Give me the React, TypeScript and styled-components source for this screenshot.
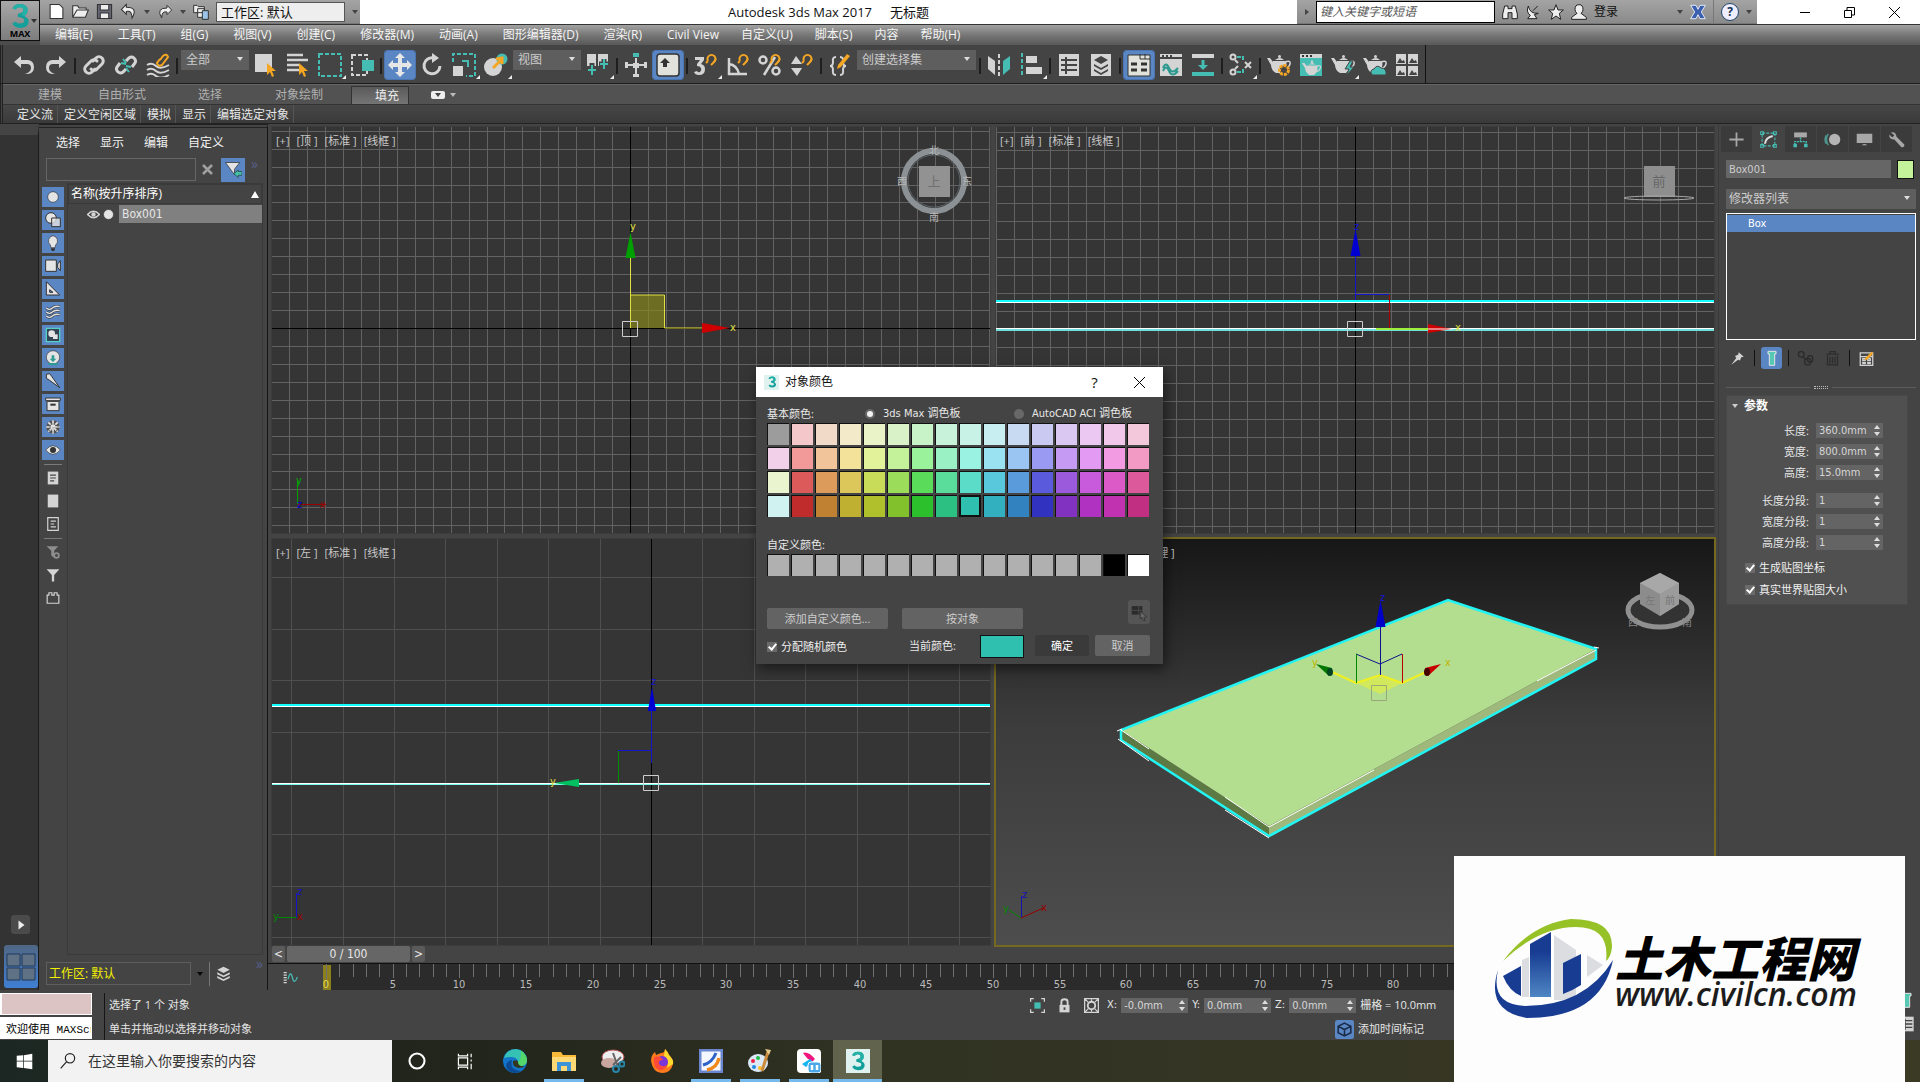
import React from "react";
import styled, { createGlobalStyle, css } from "styled-components";

const L = "#d4d4d4";
const T = "#45bdb3";
const O = "#f5a623";
const UI = `"Open Sans", "Noto Sans CJK SC", sans-serif`;
const TAHOMA = `"DejaVu Sans Condensed", "Noto Sans CJK SC", sans-serif`;

const Global = createGlobalStyle`
  * { box-sizing: border-box; }
  html, body { margin: 0; background: #444; }
  body { font: 12px/16px ${UI}; color: #e6e6e6; overflow: hidden; }
  button, input, select { font: inherit; color: inherit; margin: 0; padding: 0; border: 0; background: none; border-radius: 0; outline: 0; }
  button { display: flex; align-items: center; justify-content: center; white-space: nowrap; }
  svg { display: block; flex: none; }
`;

const Row = css`display: flex; align-items: center;`;

/* ---------- icons ---------- */
const magnet = <path d="M14 8a4 4 0 0 1 7-4c2 3-1 5-4 8M14 8l-2 2" fill="none" stroke={O} strokeWidth="2" />;
const teapot = <g><path d="M6 8h13q2 7-4 12H9Q4 17 4 12L0 5h3l3 4zM8 7q5-4 9 0z" fill={L} /><circle cx="12.5" cy="3.5" r="1.5" fill={L} /><path d="M18 9q6-2 5 2t-6 5" fill="none" stroke={L} strokeWidth="1.5" /></g>;
const cursor = <path d="M13 10v12l3-3 2 5 2-1-2-5h4z" fill={O} />;

const ICONS: Record<string, React.ReactNode> = {
  undo: <path d="M9 3L2 9l7 6v-4h6q4 0 4 4t-6 6h3q6-1 6-7t-6-7H9z" fill={L} />,
  redo: <path d="M15 3l7 6-7 6v-4H9q-4 0-4 4t6 6H8q-6-1-6-7t6-7h7z" fill={L} />,
  link: <g fill="none" stroke={L} strokeWidth="3" strokeLinecap="round"><path d="M11 8l3-3a4 4 0 0 1 6 6l-5 5a4 4 0 0 1-6 0" /><path d="M13 16l-3 3a4 4 0 0 1-6-6l5-5a4 4 0 0 1 6 0" /></g>,
  unlink: <g fill="none" strokeWidth="3"><path d="M12 8l3-3a4 4 0 0 1 6 5l-3 4M12 16l-3 3a4 4 0 0 1-6-5l3-4" stroke={L} /><path d="M9 6l3 4M7 10l5 1M12 13l5 1M12 15l3 4" stroke={T} strokeWidth="2" /></g>,
  bind: <g fill="none" strokeWidth="2"><path d="M1 12q5-3 9 1t13-1M1 17q5-3 9 1t13-1M1 22q5-3 9 1t13-1" stroke={L} /><path d="M14 7l3-4q4-3 5 1l-6 8q-4 2-5-2l3-4" stroke={O} /></g>,
  pick: <g><path d="M1 1h17v18H1z" fill={L} />{cursor}</g>,
  pickName: <g><path d="M1 2h16M1 7h21M1 12h12M1 17h12" stroke={L} strokeWidth="2.5" />{cursor}</g>,
  region: <rect x="1" y="1" width="22" height="22" fill="none" stroke={T} strokeWidth="2" strokeDasharray="4 2" />,
  crossing: <g><rect x="2" y="2" width="15" height="20" fill="none" stroke={L} strokeWidth="2" strokeDasharray="4 2" /><path d="M12 7h12v11H12z" fill={T} /></g>,
  move: <path d="M12 0l5 5h-3v5h5V7l5 5-5 5v-3h-5v5h3l-5 5-5-5h3v-5H5v3l-5-5 5-5v3h5V5H7z" fill="#e6e6e6" />,
  rotate: <g><path d="M20 13a8 8 0 1 1-6-8" fill="none" stroke={L} strokeWidth="3" /><path d="M12 0l7 5-7 5z" fill={L} /></g>,
  scale: <g><path d="M1 9V1h22v22h-9" fill="none" stroke={T} strokeWidth="2" strokeDasharray="4 2" /><path d="M1 13h10v10H1z" fill={L} /><path d="M10 8h6v6" fill="none" stroke={T} strokeWidth="2" /></g>,
  place: <g><circle cx="9" cy="14" r="9" fill={L} /><circle cx="18" cy="6" r="5.5" fill={T} /><path d="M9 15l8-8M12 6l6-1v6" stroke={O} strokeWidth="3" fill="none" /></g>,
  pivot: <g><path d="M1 1h9v12H1zM12 1h10v12H12z" fill={L} /><path d="M6 10v12M1 16h10M18 6v12M13 11h10" stroke="#444" strokeWidth="5" /><path d="M6 12v10M2 17h8M18 6v10M14 11h8" stroke={T} strokeWidth="2" /></g>,
  manip: <g><path d="M12 5v18M2 12h20" stroke={L} strokeWidth="2" /><path d="M9 10h6v5H9zM1 9h3v6H1zM20 9h3v6h-3zM9 21h6v3H9z" fill={L} /><path d="M9 0h6v4H9z" fill={T} /></g>,
  keyboard: <g><rect x="1" y="1" width="22" height="22" rx="3" fill="#e2e2dc" stroke="#333" strokeWidth="1.5" /><path d="M9 5l5 5h-3v4H7v-4H4z" fill="#333" /></g>,
  snap3: <g><path d="M1 4h9v3L7 11q4 1 4 5 0 6-6 6-4 0-5-3l3-1q1 2 3 1 2-2 1-4-1-2-4-2v-2l3-4H1z" fill={L} />{magnet}</g>,
  angle: <g><path d="M3 5v16h18M3 11q8 1 10 10" fill="none" stroke={L} strokeWidth="2.5" />{magnet}</g>,
  percent: <g><g fill="none" stroke={L} strokeWidth="2.5"><circle cx="5" cy="7" r="3.5" /><circle cx="18" cy="18" r="3.5" /><path d="M17 4L6 22" /></g>{magnet}</g>,
  spinner: <g><path d="M1 11l5-8 6 8zM1 15h11l-5 8z" fill={L} />{magnet}</g>,
  braces: <g><path d="M8 4Q4 4 5 9q0 4-3 4 3 0 3 4-1 5 3 5M12 4q4 0 3 5 0 4 3 4-3 0-3 4 1 5-3 5" fill="none" stroke={L} strokeWidth="2" /><path d="M10 12l9-11 3 2-9 11-4 2z" fill={O} /></g>,
  mirror: <g><path d="M1 3l7 5v14l-7-6z" fill={L} /><path d="M23 3l-7 5v14l7-6z" fill={T} /><path d="M12 1v22" stroke={L} strokeWidth="2" strokeDasharray="4 2" /></g>,
  align: <g><path d="M3 0v24" stroke={T} strokeWidth="2" strokeDasharray="4 2" /><path d="M7 3h11v7H7zM7 14h16v7H7z" fill={L} /></g>,
  layerList: <g><path d="M2 1h20v22H2z" fill={L} /><path d="M4 7h16M4 12h16M4 17h16M9 4v17" stroke="#444" strokeWidth="2" /></g>,
  layers: <g><path d="M2 1h20v22H2z" fill={L} /><path d="M12 3l7 4-7 4-7-4zM5 11l7 4 7-4v2l-7 4-7-4zM5 16l7 4 7-4v2l-7 4-7-4z" fill="#444" /></g>,
  ribbon: <g><path d="M1 2h22v21H1z" fill="#e2e2dc" stroke="#333" /><path d="M13 1v5h10M18 1v5" stroke="#333" fill="none" /><path d="M4 11h6M14 11h6M4 17h6M14 17h6" stroke="#333" strokeWidth="3" /></g>,
  curve: <g><path d="M1 1h22v22H1z" fill={L} /><path d="M1 5h22M4 2v2M8 2v2M12 2v2" stroke="#444" strokeWidth="2" /><path d="M4 15q3-7 6 0t9 0M4 18q3-7 6 0t9 0" fill="none" stroke="#2f9a90" strokeWidth="2" /></g>,
  schematic: <g><path d="M1 1h22v4H1z" fill={L} /><path d="M1 19h22v4H1z" fill={T} /><path d="M12 7v6" stroke={T} strokeWidth="3" /><path d="M7 12h10l-5 5z" fill={T} /></g>,
  material: <g fill="none" strokeWidth="2"><circle cx="4" cy="4" r="2.5" stroke={L} /><circle cx="4" cy="19" r="2.5" stroke={L} /><path d="M16 9l6 6M22 9l-6 6" stroke={L} /><path d="M8 4h6v4M8 19h6v-4" stroke={T} strokeDasharray="4 1" /><path d="M6 7l3 3M6 16l3-3" stroke={L} /></g>,
  renderSetup: <g>{teapot}<circle cx="17" cy="17" r="4.5" fill="#444" stroke={O} strokeWidth="3" strokeDasharray="3 1" /></g>,
  frame: <g><path d="M1 1h22v22H1z" fill={T} /><path d="M1 1h22v4H1z" fill={L} /><path d="M3 3h2M7 3h2M11 3h2" stroke="#333" strokeWidth="2" /><g transform="translate(3 6) scale(.8)">{teapot}</g></g>,
  render: <g>{teapot}<path d="M19 8l-5 8h4l-3 7 8-9h-4l3-6z" fill={T} stroke="#444" /></g>,
  cloud: <g>{teapot}<path d="M9 22q-3-5 2-6 3-5 7-1 6 0 5 7z" fill={T} stroke="#444" /></g>,
  gallery: <g><path d="M1 1h10v10H1zM13 1h10v10H13zM1 13h10v10H1zM13 13h10v10H13z" fill={L} /><path d="M2 10l3-5 2 3 2-1 1 3zM14 10l3-5 2 3 2-1 1 3zM2 22l3-5 2 3 2-1 1 3zM14 22l3-5 2 3 2-1 1 3z" fill="#444" /></g>,
  /* scene explorer */
  circle: <circle cx="12" cy="12" r="8" fill="#e4e4e4" stroke="#333" />,
  shapes: <g stroke="#333" strokeWidth="1.5"><circle cx="9" cy="9" r="8" fill="#e4e4e4" /><path d="M10 9h13v13H10z" fill="#e4e4e4" fillOpacity=".8" /></g>,
  bulb: <g stroke="#333" fill="#e4e4e4"><path d="M12 1a8 8 0 0 0-4 14l1 4h6l1-4a8 8 0 0 0-4-14z" /><path d="M9 21h6M10 23h4" strokeWidth="2" /></g>,
  camera: <path d="M1 3h16v17H1zM19 9l4-5v15l-4-5z" fill="#e4e4e4" stroke="#333" strokeWidth="1.5" />,
  ruler: <path d="M2 1l20 20H2zM7 13v4h5z" fill="#e4e4e4" fillRule="evenodd" stroke="#333" strokeWidth="1.5" />,
  waves: <g fill="none"><path d="M2 6q5 4 9 0t11-2M2 12q5 4 9 0t11-2M2 18q5 4 9 0t11-2" stroke="#333" strokeWidth="4" /><path d="M2 6q5 4 9 0t11-2M2 12q5 4 9 0t11-2M2 18q5 4 9 0t11-2" stroke="#e4e4e4" strokeWidth="2" /></g>,
  group: <g><path d="M2 2h20v20H2z" fill="#345" stroke="#56d0c4" strokeWidth="2" /><circle cx="10" cy="10" r="5" fill="#e4e4e4" /><path d="M12 11h7v7h-7z" fill="#e4e4e4" /></g>,
  xref: <g><circle cx="12" cy="11" r="10" fill="#e4e4e4" stroke="#333" /><path d="M10 8h4v5h3l-5 5-5-5h3z" fill="#2f9a90" /><path d="M5 21h14" stroke="#2f9a90" strokeWidth="3" /></g>,
  bone: <path d="M2 2l5-1 3 4 12 17L7 11 2 8z" fill="#e4e4e4" stroke="#333" strokeWidth="1.5" />,
  container: <g fill="#e4e4e4" stroke="#333" strokeWidth="1.5"><path d="M3 8h18v14H3zM1 3h22v4H1z" /><path d="M8 13h8" strokeWidth="3" /></g>,
  flake: <g><circle cx="12" cy="12" r="10" fill="#555" /><path d="M12 2v20M2 12h20M5 5l14 14M19 5L5 19" stroke="#e4e4e4" strokeWidth="2.5" strokeDasharray="5 1" /></g>,
  eyeBlue: <g><path d="M1 12q11-13 22 0-11 13-22 0z" fill="#e4e4e4" stroke="#333" /><circle cx="12" cy="12" r="4.5" fill="#333" /></g>,
  eye: <g><path d="M1 12q11-12 22 0-11 12-22 0z" fill="none" stroke={L} strokeWidth="3" /><circle cx="12" cy="12" r="4" fill={L} /></g>,
  docLines: <g><path d="M3 1h18v22H3z" fill={L} /><path d="M7 7h10M7 12h10M7 17h7" stroke="#444" strokeWidth="2" /></g>,
  docBlank: <path d="M3 1h18v22H3z" fill={L} />,
  docOutline: <path d="M3 1h18v22H3zM8 7h9M8 12h6M8 17h9" fill="none" stroke={L} strokeWidth="2" />,
  funnelGear: <g><path d="M1 2h20l-7 8v12l-5-4v-8z" fill="#8e8e8e" /><circle cx="18" cy="18" r="4" fill="none" stroke="#8e8e8e" strokeWidth="3" /></g>,
  funnel: <path d="M1 2h22l-9 10v11h-4V12z" fill={L} />,
  brick: <path d="M2 7h3V3h5v4h4V3h5v4h3v14H2z" fill="none" stroke={L} strokeWidth="2" />,
  filterBlue: <g><path d="M2 2h19l-7 9v7l-4-5z" fill="#e4e4e4" stroke="#333" /><path d="M24 14v5h-5v3l-6-5 6-5v2z" fill="#46bfa8" stroke="#244" /></g>,
  stack: <path d="M12 1l10 5-10 5L2 6zM2 10l10 5 10-5v3l-10 5-10-5zM2 16l10 5 10-5v3l-10 5-10-5z" fill={L} />,
  /* command panel */
  plus: <path d="M12 2v20M2 12h20" stroke="#a8a8a8" strokeWidth="2.5" />,
  modify: <g fill="none"><path d="M3 3h18v18H3z" stroke={T} strokeWidth="1.5" strokeDasharray="4 2" /><path d="M1 1h4v4H1zM19 1h4v4h-4zM1 19h4v4H1zM19 19h4v4h-4z" stroke={T} strokeWidth="1.5" /><path d="M7 18q1-9 11-11" stroke="#ddd" strokeWidth="3" /></g>,
  hierarchy: <g><path d="M3 2h18v7H3z" fill="#a8a8a8" /><path d="M12 9v5M4 20v-5h16v5" fill="none" stroke={T} strokeDasharray="3 1" strokeWidth="2" /><path d="M2 18h5v5H2zM17 18h5v5h-5z" fill={T} /></g>,
  motion: <g><circle cx="15" cy="12" r="8" fill="#b4b4b4" /><path d="M6 4q-5 8 0 16M3 6q-3 6 0 12" fill="none" stroke="#4d9690" strokeWidth="2" /></g>,
  display: <path d="M1 4h22v13H1zM8 20q4-3 8 0z" fill="#a8a8a8" />,
  wrench: <path d="M4 2q7-2 8 6l11 11q1 3-2 4h-2L9 12Q1 12 2 5l4 4 3-3z" fill="#a8a8a8" />,
  pin: <path d="M14 2l8 7-4 1-2 5-3-1L2 22l8-11-2-3 5-2z" fill={L} />,
  tube: <path d="M6 2h12v4h-2v17H8V6H6z" fill="#56c8b4" stroke="#e4e4e4" strokeWidth="1.5" />,
  unique: <g fill="none" stroke="#2c2c2c" strokeWidth="2"><circle cx="6" cy="6" r="4" /><path d="M8 9l5 5" /><rect x="11" y="12" width="8" height="9" rx="3" /><rect x="15" y="8" width="7" height="9" rx="3" /></g>,
  trash: <path d="M2 5h20M8 4V1h8v3M4 7v15h16V7M8 9v11M12 9v11M16 9v11" fill="none" stroke="#2c2c2c" strokeWidth="2" />,
  config: <g><path d="M2 3h20v20H2z" fill="none" stroke={L} strokeWidth="2" /><path d="M2 9h20M6 12h4v3H6zM14 12h4v3h-4zM6 18h4v2H6zM14 18h4v2h-4z" fill="none" stroke={L} strokeWidth="2" /><path d="M10 11L20 1l3 3-9 9-5 2z" fill={O} /></g>,
  isolate: <g><path d="M1 6V1h5M18 1h5v5M23 18v5h-5M6 23H1v-5" fill="none" stroke={L} strokeWidth="2" /><path d="M7 7h10v10H7z" fill={T} /></g>,
  lock: <g><path d="M7 11V6q0-4 5-4t5 4v5" fill="none" stroke={L} strokeWidth="3" /><path d="M4 11h16v12H4z" fill={L} /><path d="M12 15v4" stroke="#444" strokeWidth="3" /></g>,
  absolute: <g fill="none" stroke={L} strokeWidth="2"><path d="M1 1h22v22H1zM1 1l6 6M23 1l-6 6M1 23l6-6M23 23l-6-6" /><circle cx="12" cy="12" r="6" strokeWidth="3" /><path d="M12 2v5M12 17v5" /></g>,
  tag: <g><rect x="0" y="0" width="24" height="24" rx="3" fill="#5b86c4" /><path d="M12 4l8 4v8l-8 4-8-4V8zM4 8l8 4 8-4M12 12v8" fill="none" stroke="#1b2c48" strokeWidth="2" /></g>,
  swatchPick: <g><path d="M1 3h15v12H1z" fill="#2b2b2b" /><path d="M11 3v12M1 9h15" stroke="#555" /><path d="M13 10l9 8-4 1 2 5-3-1-2-4-2 2z" fill="#666" stroke="#2b2b2b" /></g>,
  miniCurve: <g fill="none"><path d="M1 4h5M1 8h5M1 12h5M1 16h5M1 20h5" stroke={L} strokeWidth="2" /><path d="M8 15q4-16 7-3t8-1" stroke={T} strokeWidth="2" /></g>,
  /* title bar */
  file: <path d="M3 2h13l5 5v15H3z" fill="#fff" stroke="#333" strokeWidth="1.5" />,
  open: <path d="M1 20V4h7l2 3h10v3h3l-4 10zM1 20L7 10h13" fill="#eee" stroke="#333" strokeWidth="1.5" />,
  save: <g stroke="#333" strokeWidth="1.5"><path d="M2 2h20v20H2z" fill="#667" /><path d="M6 2h12v8H6zM6 14h12v8H6z" fill="#eee" /></g>,
  qUndo: <path d="M9 2L2 9l7 7v-4q8-2 8 9 9-15-8-15z" fill="#eee" stroke="#333" strokeWidth="1.5" />,
  qRedo: <path d="M15 2l7 7-7 7v-4q-8-2-8 9-9-15 8-15z" fill="#eee" stroke="#333" strokeWidth="1.5" />,
  project: <g stroke="#333" strokeWidth="1.5" fill="#eee"><path d="M1 2h5l2 2h9v9H1zM7 7h10v13H7z" /><path d="M14 10h9v13h-9z" fill="#9cc4e8" /></g>,
  binoc: <path d="M4 3h5v4h6V3h5l3 12v7h-8v-9h-6v9H1v-7z" fill="#eee" stroke="#222" strokeWidth="1.5" />,
  dish: <path d="M5 3q2 12 15 11l-6 2 4 6H4l4-5Q1 12 5 3zM12 10l7-7" fill="#eee" stroke="#222" strokeWidth="1.5" />,
  star: <path d="M12 1l3 8h8l-6 5 2 9-7-5-7 5 2-9-6-5h8z" fill="#eee" stroke="#222" strokeWidth="1.5" />,
  user: <path d="M12 1q6 0 6 7 0 4-3 6l8 6v3H1v-3l8-6q-3-2-3-6 0-7 6-7z" fill="#eee" stroke="#222" strokeWidth="1.5" />,
  exchange: <path d="M1 2h8l3 6 3-6h8l-6 10 6 10h-8l-3-6-3 6H1l6-10z" fill="#3b5fae" stroke="#dfe8f8" strokeWidth="1.5" />,
  play: <path d="M7 3l12 9-12 9z" fill="#eee" />,
  /* task bar */
  windows: <path d="M1 4l9-1v8H1zM11 3l12-2v10H11zM1 12h9v9l-9-1zM11 12h12v11l-12-2z" fill="#fff" />,
  magnifier: <g fill="none" stroke="#222" strokeWidth="1.8"><circle cx="15" cy="8" r="7" /><path d="M10 13L1 23" /></g>,
  cortana: <circle cx="12" cy="12" r="9" fill="none" stroke="#fff" strokeWidth="2.5" />,
  taskview: <path d="M2 7h13v10H2zM2 1v3h13V1M2 23v-3h13v3M20 1v5M20 9v3M20 15v8" fill="none" stroke="#fff" strokeWidth="1.7" />,
  edge: <g><circle cx="12" cy="12" r="12" fill="#1275c9" /><path d="M1 9Q4 0 13 0q10 1 11 11 0 6-7 6-4-1-2-4Q14 6 1 9z" fill="#35c1b4" /><path d="M18 2q6 4 6 10-1 5-7 5-4-1-2-4 3 0 3-11z" fill="#55d86a" /><path d="M9 11q-3 10 9 11-8 5-14-2-3-7 5-9z" fill="#0c4a94" /><path d="M10 12q-1 6 6 7 4 0 6-2-7 1-7-4 0-3-5-1z" fill="#333621" /></g>,
  folder: <g><path d="M0 3h9l2 3h13v16H0z" fill="#f9b93a" /><path d="M0 8h24v14H0z" fill="#ffd975" /><path d="M5 13h14v9h-4v-5H9v5H5z" fill="#3d93d8" /></g>,
  snip: <g><ellipse cx="12" cy="8" rx="11" ry="7" fill="#eee" stroke="#b55" /><ellipse cx="8" cy="14" rx="8" ry="5" fill="#c9a6a0" /><path d="M12 4l5 14M20 8l-8 8" stroke="#666" strokeWidth="2" /><circle cx="15" cy="20" r="3" fill="none" stroke="#2a86a8" strokeWidth="2" /><circle cx="21" cy="15" r="2.5" fill="none" stroke="#2a86a8" strokeWidth="2" /></g>,
  firefox: <g><path d="M1 12q0-6 4-9l1 3 5-2Q15 4 15 0q3 3 4 6 5 5 4 9-2 9-11 9T1 12z" fill="#ff7a1c" /><path d="M15 0q3 3 4 6 5 5 4 9l-6 4q3-8-3-12z" fill="#ffd92e" /><circle cx="12" cy="13" r="6" fill="#7a35d8" /><path d="M4 8q6-2 9 3-5 0-4 4 3 4 8 1-2 6-8 5-6-2-5-13z" fill="#ff4a3a" /></g>,
  note: <g><rect x="1" y="1" width="22" height="22" fill="#f4f7ff" stroke="#6a86cf" strokeWidth="3" /><path d="M4 16Q13 14 17 4" stroke="#2a62c8" strokeWidth="3" fill="none" /><path d="M8 21q10-2 12-12" stroke="#f08a1c" strokeWidth="3.5" fill="none" /></g>,
  paint: <g><ellipse cx="10" cy="14" rx="10" ry="9" fill="#dbe9f6" /><circle cx="5" cy="12" r="2" fill="#e24" /><circle cx="10" cy="9" r="2" fill="#2b4" /><circle cx="6" cy="18" r="2" fill="#28d" /><circle cx="12" cy="19" r="2" fill="#fb2" /><path d="M14 22L20 3" stroke="#c98b3c" strokeWidth="3" /><path d="M17 0l6 1-2 5z" fill="#e8c98a" /></g>,
  youku: <g><rect width="24" height="24" rx="4" fill="#fff" /><path d="M6 4q5-2 12 6l-3 3Q9 9 6 4z" fill="#f0147c" /><path d="M5 15l8-5 3 3-7 5z" fill="#18b4f4" /><rect x="11" y="13" width="13" height="11" rx="3" fill="#4aa8e8" stroke="#fff" /><path d="M15 16v5M20 16v5" stroke="#fff" strokeWidth="2.5" /></g>,
};

const Icon = ({ n, s = 24 }: { n: string; s?: number }) => (
  <svg width={s} height={s} viewBox="0 0 24 24" aria-hidden="true">{ICONS[n]}</svg>
);

const Three = ({ s }: { s: number }) => (
  <svg width={s} height={s} viewBox="0 0 24 24" aria-hidden="true">
    <path d="M5 5q2-4 7-4 7 0 7 6 0 3-3 5 4 2 4 5 0 6-8 6-5 0-7-4l3-2q1 2 4 2 4 0 4-3 0-2-6-3v-3q5-1 5-3 0-3-3-3t-4 2z" fill="#13a09a" />
    <path d="M5 5q2-4 7-4 7 0 7 6 0 3-3 5l-3-1q2-2 2-4 0-3-3-3t-4 2z" fill="#25b0a8" />
  </svg>
);

/* ---------- frame ---------- */
const Shell = styled.div`display: flex; flex-direction: column; min-height: 100vh; background: #444; position: relative;`;

const Header = styled.header`display: grid; grid-template-columns: 40px 1fr; background: #4c4c4c;`;
const AppButton = styled.button`
  height: 41px; flex-direction: column; background: linear-gradient(#a8a8a8, #7d7d7d); border: 1px solid #111; color: #000;
  font: bold 9px/9px ${UI}; position: relative;
  &::after { content: ""; position: absolute; right: 2px; top: 18px; border: 3px solid transparent; border-top: 4px solid #333; }
`;
const TitleBar = styled.div`display: flex; height: 24px; background: #fff; color: #111;`;
const Strip = styled.div<{ $w: number; $gap: number }>`${Row} width: ${p => p.$w}px; gap: ${p => p.$gap}px; padding: 0 5px 0 8px; background: linear-gradient(#a4a4a4, #8a8a8a); border-bottom: 1px solid #777; color: #111;`;
const Title = styled.h1`${Row} flex: 1; justify-content: center; gap: 18px; margin: 0; font: 13px/24px ${UI};`;
const WinButtons = styled.div`display: flex; width: 163px; padding-left: 25px; button { width: 45px; }`;
const MiniDrop = styled.span<{ $c?: string }>`border: 3px solid transparent; border-top: 4px solid ${p => p.$c || "#444"}; border-bottom: 0; flex: none;`;
const MiniRight = styled.span`border: 3px solid transparent; border-left: 4px solid #444; border-right: 0; flex: none;`;
const WorkspaceSelect = styled.select`appearance: none; flex: none; width: 129px; height: 20px; padding: 0 4px; background: #eee; border: 1px solid #555; font: 13px/18px ${UI};`;
const SearchInput = styled.input`flex: none; width: 179px; height: 22px; background: #fff; border: 1px solid #000; padding-left: 3px; font-style: italic; &::placeholder { color: #555; }`;
const HelpButton = styled.button`width: 18px; height: 18px; border-radius: 50%; background: #eef; border: 1px solid #246; color: #135; font-weight: bold;`;
const MenuBar = styled.nav`${Row} height: 21px; gap: 22px; padding-left: 15px; background: linear-gradient(#a2a2a2, #777 50%, #585858); color: #f4f4f4; border-top: 1px solid #333;`;
const MenuGroup = styled.div<{ $gap: number }>`display: flex; gap: ${p => p.$gap}px;`;

const Toolbar = styled.div`display: flex; height: 39px; border-bottom: 1px solid #1c1c1c;`;
const ToolGroup = styled.div`display: flex; padding: 5px 2px 0 5px; border-right: 1px solid #111; border-left: 3px double #222;`;
const ToolButton = styled.button<{ $on?: boolean; $fly?: boolean }>`
  width: 32px; height: 30px; border-radius: 3px; position: relative;
  ${p => p.$on && `background: #5b86c4; border: 1px solid #4a74b2; background-clip: padding-box;`}
  ${p => p.$fly && `&::after { content: ""; position: absolute; right: 0; bottom: 1px; border: 2px solid #eee; border-left-color: transparent; border-top-color: transparent; }`}
`;
const ToolSep = styled.i`width: 2px; height: 16px; margin: 8px 2px 0; background: #1e1e1e;`;
const Drop = styled.span<{ $w: number }>`
  position: relative; display: block; width: ${p => p.$w}px; margin: 0 1px; height: 20px;
  &::after { content: ""; position: absolute; right: 6px; top: 7px; border: 3px solid transparent; border-top: 4px solid #ddd; border-bottom: 0; }
  select { appearance: none; width: 100%; height: 20px; background: #5e5e5e; padding-left: 5px; color: #ccc; }
`;

const Ribbon = styled.div`border-left: 3px double #222; border-bottom: 1px solid #222;`;
const RibbonTabs = styled.div`display: flex; align-items: flex-end; height: 21px; padding-left: 14px; background: #525252; border-bottom: 1px solid #333; border-top: 1px solid #666;`;
const RibbonTab = styled.button<{ $w: number; $on?: boolean }>`
  width: ${p => p.$w}px; height: 18px; color: #b0b0b0;
  ${p => p.$on && `background: linear-gradient(#5a5a5a, #757575); color: #eee; border: 1px solid #333; border-bottom: 0; padding-left: 14px; margin-left: 12px;`}
`;
const RibbonMore = styled.span`${Row} gap: 5px; height: 18px; padding-left: 22px;`;
const RibbonPanels = styled.div`display: flex; height: 18px; padding-left: 10px; background: linear-gradient(#474747, #3a3a3a); button { padding: 2px 4px 0; border-right: 1px solid #555; margin-right: 2px; }`;
const Pill = styled.button`width: 14px; height: 8px; background: #eee; border-radius: 2px;`;

const Main = styled.main`display: flex; flex: 1; min-height: 0;`;
const Dock = styled.aside`
  display: flex; flex-direction: column; justify-content: flex-end; align-items: center; width: 39px; background: #333; border-top: 11px solid #444; border-right: 1px solid #1a1a1a; padding: 0 0 2px 3px; gap: 11px;
`;
const DockPlay = styled.button`width: 19px; height: 19px; border-radius: 3px; background: #4b4b4b;`;
const LayoutTab = styled.button`width: 34px; height: 43px; border-radius: 3px; background: linear-gradient(#4f6684, #3f7fd4);`;

const Explorer = styled.section`display: flex; flex-direction: column; width: 229px; padding: 7px 4px 0 3px; border-right: 1px solid #151515; border-top: 4px double #222;`;
const ExplorerMenu = styled.div`display: flex; align-items: flex-start; gap: 20px; padding-left: 14px; height: 22px; color: #f0f0f0;`;
const ExplorerSearch = styled.div`${Row} gap: 6px; height: 25px; padding-left: 4px; input { width: 150px; height: 23px; border: 1px solid #666; }`;
const FilterButton = styled.button`width: 24px; height: 24px; background: #5b86c4; margin-left: 2px;`;
const Chevron = styled.span<{ $end?: boolean }>`color: #56608c; font-size: 14px; align-self: flex-start; line-height: 14px; ${p => p.$end && "margin-left: auto;"}`;
const ExplorerBody = styled.div`display: flex; flex: 1; padding-top: 1px;`;
const FilterColumn = styled.div`display: flex; flex-direction: column; align-items: flex-start; width: 25px; padding-top: 4px; gap: 3px;`;
const Filter = styled.button<{ $on?: boolean }>`width: 22px; height: 20px; ${p => p.$on && `background: #5b86c4;`}`;
const FilterSep = styled.i`width: 18px; height: 1px; margin: 1px 2px 0; background: #7a7a7a;`;
const Tree = styled.div`flex: 1; border: 1px solid #3a3a3a;`;
const TreeHead = styled.button`width: 100%; height: 20px; justify-content: space-between; padding: 0 2px; border: 1px solid #3a3a3a; color: #fff;`;
const Up = styled.i`border: 4px solid transparent; border-bottom: 7px solid #fff; border-top: 0;`;
const TreeRow = styled.div`${Row} height: 20px; padding-left: 19px; gap: 1px;`;
const TreeName = styled.button`flex: 1; height: 18px; margin-left: 2px; padding-left: 3px; justify-content: flex-start; background: #808080; font: 12px/18px ${TAHOMA};`;
const ExplorerFoot = styled.div`${Row} height: 35px; gap: 6px; padding: 2px 0 0 4px;`;
const YellowSelect = styled.select`appearance: none; width: 145px; height: 23px; padding-left: 2px; border: 1px solid #5e5e5e; color: #f4f000;`;
const VSep = styled.i`width: 1px; height: 24px; background: #777;`;

const Stage = styled.section`display: flex; flex-direction: column; flex: 1; min-width: 0;`;
const Views = styled.div`display: grid; flex: 1; grid-template: 1fr 1fr / 1fr 1fr; gap: 6px; padding: 3px 4px 0; min-height: 0;`;
const View = styled.div<{ $active?: boolean }>`
  position: relative; min-width: 0; min-height: 0; overflow: hidden;
  background: ${p => p.$active ? "linear-gradient(#171717, #3c3c3c 45%, #4d4d4d)" : "#353535"};
  box-shadow: ${p => p.$active ? "0 0 0 2px #75691f" : "0 0 0 1px #3c3c3c"};
  > svg { position: absolute; inset: 0; width: 100%; height: 100%; }
`;
const ViewLabel = styled.div`position: absolute; left: 4px; top: 6px; display: flex; gap: 7px; color: #c8c8c8; font: 11px/16px ${UI};`;

const TimeSlider = styled.div`${Row} height: 19px; padding-left: 4px; gap: 2px; font-family: ${TAHOMA}; border-bottom: 1px solid #111; button { height: 16px; background: #5a5a5a; border-radius: 2px; width: 13px; }`;
const TimeThumb = styled.div`width: 123px; height: 16px; background: #666; text-align: center; border-radius: 2px;`;
const Track = styled.div`display: flex; height: 26px; > span { ${Row} width: 55px; padding-left: 15px; } > svg { flex: 1; background: #2b2b2b; min-width: 0; }`;

const Panel = styled.aside`width: 202px; padding: 2px 4px 0 7px; display: flex; flex-direction: column; border-left: 1px solid #3a3a3a;`;
const Tabs = styled.div`display: flex; gap: 1px; height: 26px; margin-left: -5px; button { width: 31px; background: #3b3b3b; } button:nth-child(2) { background: #444; }`;
const NameRow = styled.div`display: flex; justify-content: space-between; padding-right: 2px; margin-top: 8px; input { width: 165px; height: 18px; background: #666; padding-left: 3px; font-family: ${TAHOMA}; font-size: 11px; color: #ccc; } button { width: 17px; height: 19px; background: #c4f29a; border: 1px solid #111; }`;
const ModList = styled(Drop)`width: auto; margin: 10px 0 4px; select { padding-left: 3px; }`;
const StackBox = styled.div`height: 127px; border: 1px solid #fff; padding-top: 1px; button { width: 100%; height: 17px; justify-content: flex-start; padding-left: 21px; background: #5b86c4; font: 11px/17px ${TAHOMA}; color: #fff; }`;
const StackTools = styled.div`${Row} height: 36px; gap: 6px; padding-left: 1px;`;
const StackTool = styled.button<{ $on?: boolean }>`width: 21px; height: 22px; border-radius: 3px; ${p => p.$on && `background: #5b86c4;`}`;
const PSep = styled.i`width: 1px; height: 16px; background: #111;`;
const Grip = styled.div`${Row} gap: 4px; height: 19px; padding-top: 4px; color: #ccc; &::before, &::after { content: ""; flex: 1; height: 1px; background: #5c5c5c; } i { width: 14px; height: 3px; border: 1px dotted #bbb; border-width: 1px 0; }`;
const Rollout = styled.section`background: #505050; width: 182px; padding: 0 0 6px; border: 1px solid #484848;`;
const RollHead = styled.h2`${Row} gap: 6px; height: 19px; margin: 0 0 8px; padding-left: 5px; font: bold 12px/18px ${UI}; color: #fff;`;
const Field = styled.label<{ $gap?: boolean }>`${Row} justify-content: flex-end; gap: 7px; height: 15px; margin: 0 24px 6px 0; font-size: 11px; ${p => p.$gap && `margin-top: 13px;`}`;
const Spin = styled.span<{ $w: number }>`${Row} width: ${p => p.$w}px; height: 15px; background: #646464; padding-right: 3px; input { flex: 1; min-width: 0; padding-left: 3px; font: 11px/15px ${TAHOMA}; color: #d6d6d6; }`;
const Check = styled.label`
  ${Row} gap: 4px; font-size: 11px; line-height: 16px; color: #f0f0f0;
  input { appearance: none; width: 10px; height: 10px; background: #6a6a6a; position: relative; }
  input::after { content: ""; position: absolute; left: 3px; top: 0; width: 3px; height: 6px; border: solid #fff; border-width: 0 2px 2px 0; transform: rotate(40deg); }
`;
const CheckGroup = styled.div`display: grid; gap: 6px; padding: 4px 0 0 18px;`;

/* ---------- dialog ---------- */
const Dialog = styled.div`position: absolute; left: 756px; top: 367px; width: 407px; background: #444; box-shadow: 2px 5px 12px rgba(0,0,0,.5); font-size: 11px; color: #e8e8e8;`;
const DialogHead = styled.div`${Row} height: 30px; background: #fff; color: #111; font: 12px/30px ${UI}; padding: 0 12px 0 8px; h2 { font: inherit; margin: 0 auto 0 6px; } button { width: 23px; height: 30px; font: 15px/30px ${UI}; } button + button { margin-left: 22px; }`;
const DialogBody = styled.div`padding: 8px 13px 6px 11px;`;
const PaletteHead = styled.div`display: grid; grid-template-columns: 98px 149px 1fr; height: 18px; > span { line-height: 18px; }`;
const Radio = styled.label`${Row} gap: 8px; font-family: ${TAHOMA}; white-space: nowrap; input { appearance: none; width: 10px; height: 10px; border-radius: 50%; background: #686868; } input:checked { border: 2px solid #686868; background: #f2f2f2; }`;
const Swatches = styled.div`display: grid; grid-template-columns: repeat(16, 22px); gap: 2px;`;
const Swatch = styled.button<{ $c: string; $sel?: boolean }>`height: 22px; background: ${p => p.$c}; border: solid #111; border-width: ${p => p.$sel ? "2px" : "1px 0 0 1px"};`;
const CustomLabel = styled.div`margin: 20px 0 1px; line-height: 16px;`;
const PaletteActions = styled.div`display: flex; align-items: flex-end; gap: 14px; height: 29px; margin-top: 24px;`;
const DialogActions = styled.div`display: flex; gap: 6px; height: 23px; margin-top: 6px;`;
const Btn = styled.button<{ $w: number; $dark?: boolean }>`width: ${p => p.$w}px; height: 21px; border-radius: 2px; background: ${p => p.$dark ? "#3a3a3a" : "#636363"}; color: ${p => p.$dark ? "#fff" : "#ccc"};`;
const PickBtn = styled.button`width: 22px; height: 24px; border-radius: 3px; background: #555; margin-left: auto; align-self: flex-start;`;
const CurrentLabel = styled.span`margin-left: auto; line-height: 22px; padding-right: 18px;`;
const Current = styled.button`width: 44px; height: 23px; background: #2fc0b0; border: 1px solid #111; margin-right: 5px;`;

/* ---------- footer ---------- */
const Status = styled.footer`display: flex; height: 50px; padding-top: 3px; background: #444;`;
const Script = styled.div`width: 92px; display: grid; gap: 1px; margin-right: 12px; input { width: 92px; height: 22px; border: 1px solid #fff; border-left-width: 2px; background: #dcc4c4; color: #000; padding-left: 4px; } input + input { background: #fff; font: 11px/20px "Liberation Mono", "Noto Sans CJK SC", monospace; }`;
const Prompt = styled.div`display: grid; grid-template-rows: 24px 24px; align-items: center; flex: 1; border-left: 1px solid #151515; padding-left: 4px; font-size: 11px;`;
const Coords = styled.div`width: 894px; font-size: 11px; display: grid; grid-template-rows: 24px 24px; > div { ${Row} gap: 4px; white-space: nowrap; } > div + div { padding-left: 309px; } label { ${Row} gap: 4px; font-family: ${TAHOMA}; } button { width: 23px; }`;
const NavBits = styled.div`position: absolute; right: 5px; bottom: 50px; display: grid; gap: 8px; svg { width: 16px; height: 16px; }`;

const Taskbar = styled.footer`display: flex; height: 42px; background: linear-gradient(90deg, #1c2723 0, #22251b 25%, #303222 45%, #3b3a25);`;
const Start = styled.button`width: 48px;`;
const TaskSearch = styled.label`${Row} width: 344px; gap: 12px; padding-left: 12px; background: #f2f2f2; color: #222; input { flex: 1; min-width: 0; font: 14px/20px ${UI}; } input::placeholder { color: #333; }`;
const TaskApp = styled.button<{ $open?: boolean; $on?: boolean }>`
  width: 49px; border-bottom: 3px solid transparent; border-top: 3px solid transparent;
  ${p => p.$open && `background: linear-gradient(#76b9ed, #76b9ed) 50% 100% / 40px 3px no-repeat border-box;`}
  ${p => p.$on && `background: #62634c; border-bottom-color: #76b9ed; border-top-color: #62634c;`}
`;
const MaxTile = styled.span<{ $s: number }>`display: flex; align-items: center; justify-content: center; flex: none; width: ${p => p.$s}px; height: ${p => p.$s}px; background: #dff2f0;`;

const Watermark = styled.div`position: absolute; right: 15px; bottom: 0; width: 451px; height: 226px; ${Row} padding: 0 0 0 39px; background: #fdfdfd; color: #000;`;
const Brand = styled.div`margin-top: 4px; white-space: nowrap; strong { display: block; font: italic 900 48px/46px "Noto Sans CJK SC", sans-serif; } span { display: block; font: italic 600 32px/30px "Open Sans", sans-serif; color: #1c1c1c; }`;

/* ---------- data ---------- */
const MENUS = ["编辑(E)", "工具(T)", "组(G)", "视图(V)", "创建(C)", "修改器(M)", "动画(A)", "图形编辑器(D)", "渲染(R)", "Civil View"];
const MENUS_END = ["自定义(U)", "脚本(S)", "内容", "帮助(H)"];

type Tool = string | { drop: string; w: number };
const TOOLS: Tool[] = ["undo", "redo", "|", "link", "unlink", "bind", "|", { drop: "全部", w: 68 }, "pick", "pickName", "region>", "crossing", "|", "move*", "rotate", "scale>", "place>", { drop: "视图", w: 68 }, "pivot>", "|", "manip", "keyboard*", "|", "snap3>", "angle", "percent", "spinner", "|", "braces", { drop: "创建选择集", w: 119 }, "|", "mirror", "align>", "|", "layerList", "layers", "|", "ribbon*", "curve", "schematic", "|", "material>", "|", "renderSetup", "frame", "render>", "cloud", "gallery"];

const FILTERS = ["circle", "shapes", "bulb", "camera", "ruler", "waves", "group", "xref", "bone", "container", "flake", "eyeBlue"];

const PALETTE = `9c9c9c f4c8cb f2dac8 f2eac8 eaf2c8 daf2c8 c8f2c8 c8f2da c8f2e6 c8eef2 c8daf2 c9c9f2 dac8f2 eac8f2 f2c8ea f2c8da
f2d0ea f29a9a f2c49a f2e29a e2f29a c4f29a 9af29a 9af2c4 9af2e2 9ae2f2 9ac4f2 9a9af2 c49af2 e29af2 f29ae2 f29ac4
eaf5cf dc5a5a dc9b5a dcc85a c8dc5a 9bdc5a 5adc5a 5adc9b 5adcc8 5ac8dc 5a9bdc 5a5adc 9b5adc c85adc dc5ac8 dc5a9b
d0f3f2 c02c2c c08232 c0b032 b0c02c 82c02c 2cc02c 2cc082 2fc0b0 32b0c0 3282c0 3232c0 8232c0 b032c0 c032b0 c02f82`.split(/\s+/).map(c => "#" + c);
const CUSTOM = [...Array(14).fill("#b0b0b0"), "#000", "#fff"];

/* ---------- drawings ---------- */
const GridLines = ({ x, y, ox, oy, step, color, noX }: { x: number; y: number; ox: number; oy: number; step: number; color: string; noX?: boolean }) => {
  const out: React.ReactNode[] = [];
  for (let k = -45; k <= 45; k++) {
    const vx = Math.round(ox + k * step), hy = Math.round(oy + k * step);
    if (k && vx >= x && vx < x + 718) out.push(<rect key={"v" + k} x={vx} y={y} width={1} height={406} fill={color} />);
    if (k && hy >= y && hy < y + 406) out.push(<rect key={"h" + k} x={x} y={hy} width={718} height={1} fill={color} />);
  }
  return <g shapeRendering="crispEdges">{out}<rect x={ox} y={y} width={1} height={406} fill="#000" />{!noX && <rect x={x} y={oy} width={718} height={1} fill="#000" />}</g>;
};
const Lbl = ({ x, y, c, children }: { x: number; y: number; c: string; children: string }) => <text x={x} y={y} fill={c} fontSize="11" fontFamily="DejaVu Sans Condensed, sans-serif">{children}</text>;
const ringText = { fill: "#b8b8b8", fontSize: 10, fontFamily: "Noto Sans CJK SC, sans-serif", textAnchor: "middle" as const };

const Canvas = ({ x, y, children }: { x: number; y: number; children: React.ReactNode }) => (
  <svg viewBox={`${x} ${y} 718 406`} preserveAspectRatio="xMidYMid slice">{children}</svg>
);

const TopView = () => (
  <Canvas x={272} y={127}>
    <GridLines x={272} y={127} ox={630} oy={328} step={17.93} color="#626262" />
    <path d="M630 295h34v33h-34z" fill="#8c8c1c" fillOpacity=".65" />
    <path d="M630.5 258v37h34v33h40M630.500 328v-33" fill="none" stroke="#e0e040" strokeWidth="1" />
    <path d="M630.5 232l5 26h-10z" fill="#00a000" /><path d="M730 328l-28-5v10z" fill="#d00000" />
    <path d="M622.500 321.500h15v15h-15z" fill="none" stroke="#ccc" />
    <Lbl x={630} y={230} c="#e0e040">y</Lbl><Lbl x={730} y={331} c="#e0e040">x</Lbl>
    <path d="M297.500 504v-24" stroke="#00a000" /><path d="M298 504.500h28" stroke="#900" /><Lbl x={296} y={484} c="#0a0">y</Lbl><Lbl x={297} y={508} c="#00c">z</Lbl><Lbl x={320} y={508} c="#900">x</Lbl>
    <circle cx="934" cy="181" r="30" fill="none" stroke="#8b9194" strokeWidth="6" />
    <circle cx="934" cy="181" r="26" fill="none" stroke="#5a6266" strokeWidth="1" />
    <path d="M919 166h31v31h-31z" fill="#929292" />
    <text x="934" y="186" {...ringText} fontSize={13} fill="#707070">上</text>
    <text x="934" y="154" {...ringText}>北</text><text x="934" y="221" {...ringText}>南</text><text x="902" y="185" {...ringText}>西</text><text x="967" y="185" {...ringText}>东</text>
  </Canvas>
);

const FrontView = () => (
  <Canvas x={996} y={127}>
    <GridLines x={996} y={127} ox={1355} oy={329} step={17.93} color="#626262" noX />
    <g shapeRendering="crispEdges">
      <path d="M996 300h718v2H996z" fill="#1ff" /><path d="M996 302h718v1H996z" fill="#fff" />
      <path d="M996 328h718v1H996z" fill="#fff" /><path d="M996 329h718v2H996z" fill="#6fe0dc" />
      <path d="M1355 250h1v50h-1zM1355 294h34v1h-34z" fill="#1414c8" /><path d="M1389 295h1v33h-1z" fill="#a00" />
      <path d="M1376 328h52v2h-52z" fill="#9cf03c" />
    </g>
    <path d="M1355.500 229l5 27h-10z" fill="#0000d0" /><path d="M1452 329l-24-5v9z" fill="#d00000" /><path d="M1428 329h24" stroke="#fff" />
    <path d="M1347.500 321.500h15v15h-15z" fill="none" stroke="#ccc" />
    <Lbl x={1354} y={230} c="#1414d8">z</Lbl><Lbl x={1455} y={331} c="#e0e040">x</Lbl>
    <path d="M1644 166h31v31h-31z" fill="#8e8e8e" /><text x="1659" y="186" {...ringText} fontSize={13} fill="#666">前</text>
    <ellipse cx="1659" cy="198" rx="35" ry="2" fill="none" stroke="#a8a8a8" strokeWidth="1" />
  </Canvas>
);

const LeftView = () => (
  <Canvas x={272} y={539}>
    <GridLines x={272} y={539} ox={651} oy={783} step={51.4} color="#4f4f4f" noX />
    <g shapeRendering="crispEdges">
      <path d="M651 710h1v53h-1zM618 750h33v1h-33z" fill="#1414c8" /><path d="M618 751h1v32h-1z" fill="#009000" />
      <path d="M648 705h8v6h-8z" fill="#00c" />
      <path d="M272 704h718v2H272z" fill="#1ff" /><path d="M272 706h718v1H272z" fill="#fff" />
      <path d="M272 783h718v1H272z" fill="#fff" /><path d="M272 784h718v1H272z" fill="#7fe" />
    </g>
    <path d="M652 687l4 24h-8z" fill="#0000d0" /><path d="M554 783l25-4v8z" fill="#00c060" />
    <path d="M643.500 775.500h15v15h-15z" fill="none" stroke="#ccc" />
    <Lbl x={651} y={685} c="#1414d8">z</Lbl><Lbl x={550} y={785} c="#e0e040">y</Lbl>
    <path d="M296.500 917v-24" stroke="#1414c8" /><path d="M278 917.500h18" stroke="#080" /><Lbl x={297} y={895} c="#1414c8">z</Lbl><Lbl x={273} y={920} c="#080">y</Lbl><Lbl x={297} y={920} c="#900">x</Lbl>
  </Canvas>
);

const PerspectiveView = () => (
  <Canvas x={996} y={539}>
    <path d="M1121 730l148 96v11l-148-97z" fill="#5d7a45" /><path d="M1269 826l327-177v10l-327 178z" fill="#9fb97c" />
    <path d="M1448 600l148 49-327 177-148-96z" fill="#b3de90" />
    <path d="M1121 740v-10l327-130 148 49v10l-327 177z" fill="none" stroke="#22f4f4" strokeWidth="2.500" />
    <path d="M1121 730l28 19M1225 797l44 30 105-57M1537 681l59-31M1117 731l5-2M1118 739l31 22M1225 810l44 28M1594 647l5 1" fill="none" stroke="#fff" />
    <path d="M1356 683l24-8 22 8-22 11z" fill="#e8f03c" fillOpacity=".6" />
    <path d="M1356 683l-24-11M1402 683l24-11" stroke="#f0f020" strokeWidth="2" /><path d="M1356 683l24-8 22 8" fill="none" stroke="#f0f020" strokeWidth="2" />
    <path d="M1380.500 625v50M1356 654l24 10 22-10" fill="none" stroke="#10108c" /><path d="M1356.500 654v29" stroke="#080" /><path d="M1402.500 654v29" stroke="#b00" />
    <path d="M1380.500 600l5 27h-10z" fill="#0000c8" /><path d="M1316 664l16 4-3 8z" fill="#007800" /><path d="M1441 664l-16 4 3 8z" fill="#c80000" /><ellipse cx="1330" cy="672" rx="3" ry="4" fill="#042" /><ellipse cx="1427" cy="672" rx="3" ry="4" fill="#400" />
    <path d="M1371.500 685.500h15v15h-15z" fill="none" stroke="#99a878" />
    <Lbl x={1380} y={601} c="#1414d8">z</Lbl><Lbl x={1312} y={666} c="#c0b400">y</Lbl><Lbl x={1445} y={666} c="#c0b400">x</Lbl>
    <path d="M1021.500 918v-22" stroke="#1414b0" /><path d="M1021 918l-12-8" stroke="#080" /><path d="M1021 918l22-10" stroke="#900" /><Lbl x={1022} y={898} c="#1414b0">z</Lbl><Lbl x={1003} y={912} c="#080">y</Lbl><Lbl x={1041} y={911} c="#900">x</Lbl>
    <ellipse cx="1660" cy="610" rx="32" ry="17" fill="#333" stroke="#909090" strokeWidth="5" />
    <path d="M1660 573l19 10v21l-19 12-20-12v-21z" fill="#8c8c8c" /><path d="M1660 594l19-11v21l-19 12z" fill="#9b9b9b" /><path d="M1640 583l20-10 19 10-19 11z" fill="#a8a8a8" />
    <text x="1650" y="604" {...ringText} fill="#777">左</text><text x="1670" y="604" {...ringText} fill="#777">前</text>
    <text x="1633" y="626" {...ringText} fill="#888">西</text><text x="1687" y="626" {...ringText} fill="#888">南</text>
  </Canvas>
);

const LABELLED = 16;
const Ruler = () => (
  <svg height="26">
    <rect x="0" y="1" width="8" height="25" fill="#8c7f1e" />
    {Array.from({ length: 101 }, (_, i) => <rect key={i} x={Math.round(3 + i * 13.34)} y={0} width={1} height={i % 5 ? 13 : 25} fill="#707070" />)}
    {Array.from({ length: LABELLED + 1 }, (_, i) => (
      <g key={i}><rect x={Math.round(3 + i * 66.7) - 7} y={14} width={i ? 15 : 0} height={11} fill="#2b2b2b" />
        <text x={Math.round(3 + i * 66.7)} y={24} textAnchor="middle" fontSize="11" fontFamily="DejaVu Sans Condensed, sans-serif" fill={i ? "#bbb" : "#e8d840"}>{i * 5}</text></g>
    ))}
  </svg>
);

const SpinArrows = () => <svg width="6" height="11" viewBox="0 0 6 11"><path d="M3 0l3 4H0zM0 7h6l-3 4z" fill="#ddd" /></svg>;
const SpinField = ({ label, value, gap }: { label: string; value: string; gap?: boolean }) => (
  <Field $gap={gap}>{label}<Spin $w={67}><input defaultValue={value} /><SpinArrows /></Spin></Field>
);

const Logo = () => (
  <svg width="122" height="104" viewBox="0 0 122 104" aria-hidden="true">
    <defs><linearGradient id="tower" x1="0" y1="0" x2="0" y2="1"><stop offset=".3" stopColor="#173c92" /><stop offset="1" stopColor="#4f86c4" /></linearGradient></defs>
    <path d="M61 18l22 15v50H61zM94 38l16 10-16 12z" fill="#dcdde0" />
    <path d="M29 43l7-3v40h-7z" fill="#dcdde0" />
    <path d="M10 44Q38 7 78 2q42 0 41 28-1 10-6 14 4-34-30-34Q46 10 10 44z" fill="#97c227" />
    <path d="M5 53Q-3 88 32 89q60 0 88-46-12 58-86 58Q-8 94 5 53z" fill="#173c92" />
    <path d="M37 27l21-12v65H37z" fill="url(#tower)" /><path d="M10 59l18-10v30q-12-5-18-20zM70 46l18-9v31q-9 6-18 9z" fill="#173c92" />
  </svg>
);

const VIEWS = [
  { name: "顶", shading: "线框", Draw: TopView },
  { name: "前", shading: "线框", Draw: FrontView },
  { name: "左", shading: "线框", Draw: LeftView },
  { name: "透视", shading: "默认明暗处理", Draw: PerspectiveView, active: true },
];

const Spacer = styled.span`flex: 1;`;

export default function App() {
  return (
    <Shell>
      <Global />
      <Header>
        <AppButton><Three s={26} />MAX</AppButton>
        <div>
          <TitleBar>
            <Strip $w={320} $gap={7}>
              {["file", "open", "save", "qUndo"].map(n => <button key={n} aria-label={n}><Icon n={n} s={17} /></button>)}
              <MiniDrop /><button aria-label="redo"><Icon n="qRedo" s={16} /></button><MiniDrop /><button aria-label="project"><Icon n="project" s={16} /></button>
              <WorkspaceSelect aria-label="工作区"><option>工作区: 默认</option></WorkspaceSelect><MiniDrop />
            </Strip>
            <Title><span>Autodesk 3ds Max 2017</span><span>无标题</span></Title>
            <Strip $w={460} $gap={7}>
              <MiniRight />
              <SearchInput aria-label="搜索" placeholder="键入关键字或短语" />
              <Icon n="binoc" s={16} /><Icon n="dish" s={16} /><Icon n="star" s={16} /><Icon n="user" s={16} />
              <button>登录</button><Spacer /><MiniDrop /><Icon n="exchange" s={16} /><VSep /><HelpButton>?</HelpButton><MiniDrop />
            </Strip>
            <WinButtons>
              <button aria-label="最小化"><svg width="10" height="10"><path d="M0 5.500h10" stroke="#000" /></svg></button>
              <button aria-label="还原"><svg width="11" height="11"><path d="M.5 3.500h7v7h-7zM3 3V.5h7.500V8H8" fill="none" stroke="#000" /></svg></button>
              <button aria-label="关闭"><svg width="11" height="11"><path d="M0 0l11 11M11 0L0 11" stroke="#000" /></svg></button>
            </WinButtons>
          </TitleBar>
          <MenuBar>
            <MenuGroup $gap={25}>{MENUS.map(m => <button key={m}>{m}</button>)}</MenuGroup>
            <MenuGroup $gap={22}>{MENUS_END.map(m => <button key={m}>{m}</button>)}</MenuGroup>
          </MenuBar>
        </div>
      </Header>

      <Toolbar>
        <ToolGroup>
          {TOOLS.map((t, i) => {
            if (typeof t !== "string") return <Drop key={i} $w={t.w}><select aria-label={t.drop}><option>{t.drop}</option></select></Drop>;
            if (t === "|") return <ToolSep key={i} />;
            const n = t.replace(/[*>]/, "");
            return <ToolButton key={i} aria-label={n} $on={t.endsWith("*")} $fly={t.endsWith(">")}><Icon n={n} /></ToolButton>;
          })}
        </ToolGroup>
      </Toolbar>

      <Ribbon>
        <RibbonTabs>
          <RibbonTab $w={66}>建模</RibbonTab><RibbonTab $w={78}>自由形式</RibbonTab><RibbonTab $w={98}>选择</RibbonTab><RibbonTab $w={80}>对象绘制</RibbonTab>
          <RibbonTab $w={58} $on>填充</RibbonTab><RibbonMore><Pill aria-label="显示"><MiniDrop /></Pill><MiniDrop $c="#bbb" /></RibbonMore>
        </RibbonTabs>
        <RibbonPanels>{["定义流", "定义空闲区域", "模拟", "显示", "编辑选定对象"].map(b => <button key={b}>{b}</button>)}</RibbonPanels>
      </Ribbon>

      <Main>
        <Dock>
          <DockPlay aria-label="展开"><Icon n="play" s={12} /></DockPlay>
          <LayoutTab aria-label="视口布局"><svg width="30" height="28"><path d="M1 1h13v12H1zM16 1h13v12H16zM1 15h13v12H1zM16 15h13v12H16z" fill="#5f7185" stroke="#233a58" /></svg></LayoutTab>
        </Dock>

        <Explorer>
          <ExplorerMenu>{["选择", "显示", "编辑", "自定义"].map(m => <button key={m}>{m}</button>)}</ExplorerMenu>
          <ExplorerSearch>
            <input aria-label="查找" />
            <button aria-label="清除"><svg width="11" height="11"><path d="M1 1l9 9M10 1l-9 9" stroke="#a0a0a0" strokeWidth="2.500" /></svg></button>
            <FilterButton aria-label="过滤"><Icon n="filterBlue" s={18} /></FilterButton><Chevron>»</Chevron>
          </ExplorerSearch>
          <ExplorerBody>
            <FilterColumn>
              {FILTERS.map(f => <Filter key={f} $on aria-label={f}><Icon n={f} s={16} /></Filter>)}
              <FilterSep />
              {["docLines", "docBlank", "docOutline"].map(f => <Filter key={f} aria-label={f}><Icon n={f} s={14} /></Filter>)}
              <FilterSep />
              {["funnelGear", "funnel", "brick"].map(f => <Filter key={f} aria-label={f}><Icon n={f} s={14} /></Filter>)}
            </FilterColumn>
            <Tree>
              <TreeHead>名称(按升序排序)<Up /></TreeHead>
              <TreeRow><Icon n="eye" s={13} /><Icon n="circle" s={15} /><TreeName>Box001</TreeName></TreeRow>
            </Tree>
          </ExplorerBody>
          <ExplorerFoot>
            <YellowSelect aria-label="工作区"><option>工作区: 默认</option></YellowSelect><MiniDrop $c="#0a0a0a" /><VSep /><Icon n="stack" s={15} /><Chevron $end>»</Chevron>
          </ExplorerFoot>
        </Explorer>

        <Stage>
          <Views>
            {VIEWS.map(({ name, shading, Draw, active }) => (
              <View key={name} $active={active}><Draw /><ViewLabel><span>[+]</span><span>[{name} ]</span><span>[标准 ]</span><span>[{shading} ]</span></ViewLabel></View>
            ))}
          </Views>
          <TimeSlider><button>&lt;</button><TimeThumb>0 / 100</TimeThumb><button>&gt;</button></TimeSlider>
          <Track><span><Icon n="miniCurve" s={15} /></span><Ruler /></Track>
        </Stage>

        <Panel>
          <Tabs>{["plus", "modify", "hierarchy", "motion", "display", "wrench"].map(n => <button key={n} aria-label={n}><Icon n={n} s={17} /></button>)}</Tabs>
          <NameRow><input aria-label="名称" defaultValue="Box001" /><button aria-label="颜色" /></NameRow>
          <ModList $w={189}><select aria-label="修改器列表"><option>修改器列表</option></select></ModList>
          <StackBox><button>Box</button></StackBox>
          <StackTools>
            <StackTool aria-label="锁定"><Icon n="pin" s={15} /></StackTool><PSep /><StackTool $on aria-label="显示最终结果"><Icon n="tube" s={16} /></StackTool><PSep />
            <StackTool aria-label="唯一"><Icon n="unique" s={17} /></StackTool><StackTool aria-label="移除"><Icon n="trash" s={15} /></StackTool><PSep /><StackTool aria-label="配置"><Icon n="config" s={15} /></StackTool>
          </StackTools>
          <Grip><i /></Grip>
          <Rollout>
            <RollHead><MiniDrop $c="#ccc" />参数</RollHead>
            <SpinField label="长度:" value="360.0mm" /><SpinField label="宽度:" value="800.0mm" /><SpinField label="高度:" value="15.0mm" />
            <SpinField label="长度分段:" value="1" gap /><SpinField label="宽度分段:" value="1" /><SpinField label="高度分段:" value="1" />
            <CheckGroup>
              <Check><input type="checkbox" defaultChecked />生成贴图坐标</Check>
              <Check><input type="checkbox" defaultChecked />真实世界贴图大小</Check>
            </CheckGroup>
          </Rollout>
        </Panel>
      </Main>

      <Status>
        <Script><input aria-label="宏录制器" /><input aria-label="MAXScript" defaultValue="欢迎使用 MAXScript" /></Script>
        <Prompt><span>选择了 1 个 对象</span><span>单击并拖动以选择并移动对象</span></Prompt>
        <Coords>
          <div>
            {["isolate", "lock", "absolute"].map(n => <button key={n} aria-label={n}><Icon n={n} s={15} /></button>)}
            {[["X:", "-0.0mm"], ["Y:", "0.0mm"], ["Z:", "0.0mm"]].map(([a, v]) => <label key={a}>{a}<Spin $w={67}><input defaultValue={v} /><SpinArrows /></Spin></label>)}
            <span>栅格 = 10.0mm</span>
          </div>
          <div><Icon n="tag" s={19} /><span>添加时间标记</span></div>
        </Coords>
      </Status>

      <Taskbar>
        <Start aria-label="开始"><Icon n="windows" s={17} /></Start>
        <TaskSearch><Icon n="magnifier" s={16} /><input placeholder="在这里输入你要搜索的内容" /></TaskSearch>
        {["cortana", "taskview", "edge", "folder+", "snip", "firefox", "note+", "paint+", "youku+"].map(n => (
          <TaskApp key={n} $open={n.endsWith("+")} aria-label={n}><Icon n={n.replace("+", "")} s={n === "cortana" ? 20 : n === "taskview" ? 17 : 24} /></TaskApp>
        ))}
        <TaskApp $on aria-label="3ds Max"><MaxTile $s={24}><Three s={20} /></MaxTile></TaskApp>
      </Taskbar>
      <NavBits><Icon n="tube" /><Icon n="layerList" /></NavBits>

      <Dialog role="dialog" aria-label="对象颜色">
        <DialogHead><MaxTile $s={15}><Three s={12} /></MaxTile><h2>对象颜色</h2><button>?</button><button aria-label="关闭"><svg width="11" height="11"><path d="M0 0l11 11M11 0L0 11" stroke="#000" /></svg></button></DialogHead>
        <DialogBody>
          <PaletteHead>
            <span>基本颜色:</span>
            <Radio><input type="radio" name="palette" defaultChecked />3ds Max 调色板</Radio>
            <Radio><input type="radio" name="palette" />AutoCAD ACI 调色板</Radio>
          </PaletteHead>
          <Swatches>{PALETTE.map((c, i) => <Swatch key={i} $c={c} $sel={i === 56} aria-label={c} />)}</Swatches>
          <CustomLabel>自定义颜色:</CustomLabel>
          <Swatches>{CUSTOM.map((c, i) => <Swatch key={i} $c={c} aria-label={c} />)}</Swatches>
          <PaletteActions><Btn $w={121}>添加自定义颜色...</Btn><Btn $w={121}>按对象</Btn><PickBtn aria-label="拾取"><Icon n="swatchPick" s={17} /></PickBtn></PaletteActions>
          <DialogActions>
            <Check><input type="checkbox" defaultChecked />分配随机颜色</Check>
            <CurrentLabel>当前颜色:</CurrentLabel><Current aria-label="当前颜色" />
            <Btn $w={54} $dark>确定</Btn><Btn $w={55}>取消</Btn>
          </DialogActions>
        </DialogBody>
      </Dialog>

      <Watermark><Logo /><Brand><strong>土木工程网</strong><span>www.civilcn.com</span></Brand></Watermark>
    </Shell>
  );
}
